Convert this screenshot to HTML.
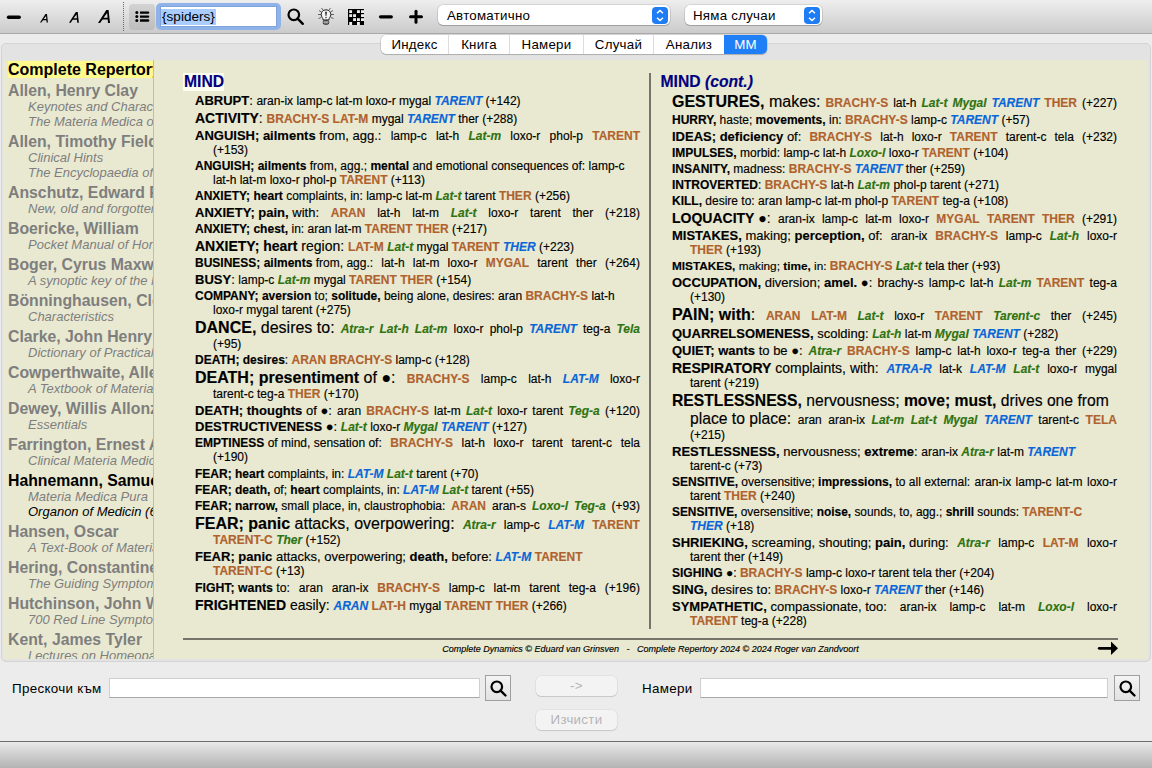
<!DOCTYPE html>
<html><head><meta charset="utf-8">
<style>
*{box-sizing:border-box}
html,body{margin:0;padding:0}
body{width:1152px;height:768px;overflow:hidden;position:relative;background:#ECECEC;font-family:"Liberation Sans",sans-serif;color:#000}
.abs{position:absolute}
#tb{position:absolute;left:0;top:0;width:1152px;height:34px;background:linear-gradient(#EEEEEE,#CBCBCB);border-bottom:1px solid #A9A9A9}
.ta{position:absolute;font-weight:bold;font-style:italic;line-height:1}
#listbtn{position:absolute;left:129px;top:4px;width:26px;height:26px;border-radius:4px;background:linear-gradient(#D3D3D3,#BDBDBD)}
#sf{position:absolute;left:156px;top:3px;width:125px;height:27px;border-radius:5px;background:#8FB3E8;padding:3px 4px}
#sf .in{width:100%;height:100%;background:#fff;border:1px solid #7FA4DA;position:relative}
#sf .sel{position:absolute;left:0px;top:2px;height:16px;background:#A9CDFF;font-size:13.6px;line-height:16px;padding:0 1px;color:#000}
.dd{position:absolute;top:5px;height:20px;background:#fff;border-radius:5px;box-shadow:0 0 0 0.5px rgba(0,0,0,0.18),0 1px 1px rgba(0,0,0,0.18);font-size:13.3px;letter-spacing:0.25px;line-height:20px}
.dd .st{position:absolute;top:1.5px;width:16px;height:17px;border-radius:4px;background:#1E7CF4}
#tabs{position:absolute;left:381px;top:35px;height:19px;display:flex;background:#fff;border-radius:5px;box-shadow:0 0 0 0.5px rgba(0,0,0,0.2),0 1px 1px rgba(0,0,0,0.15);font-size:13.3px;letter-spacing:0.25px;line-height:19px}
#tabs div{text-align:center;border-left:1px solid #DCDCDC}
#tabs div:first-child{border-left:none}
#tabs .on{background:#1F7FF7;color:#fff;border-radius:0 5px 5px 0;border-left:none}
#panel{position:absolute;left:1px;top:43px;width:1150px;height:619px;border:1px solid #D4D4D4;border-radius:5px;background:#E3E3E3}
#cream{position:absolute;left:3px;top:60px;width:1145px;height:599px;background:#E9E9D1}
#side{position:absolute;left:3px;top:60px;width:151px;height:599px;overflow:hidden;border-right:1px solid #BDBDB5}
#side .hl{position:absolute;left:5px;top:1px;width:150px;height:17px;background:#FFFA8C}
#side .cr{position:absolute;left:5px;top:0px;font-weight:bold;font-size:16px;line-height:19px;white-space:nowrap}
#sidelist{position:absolute;left:5px;top:21px;white-space:nowrap;color:#7E7E7E}
.au{font-weight:bold;font-size:15.8px;line-height:17px;margin-top:4px}
.au:first-child{margin-top:1px}
.bk{font-style:italic;font-size:13px;line-height:15px;padding-left:20px}
.act{color:#000}
#main{position:absolute;left:0;top:0;-webkit-text-stroke:0.15px currentColor}
.ln{position:absolute;white-space:nowrap;line-height:20px;height:20px}
.ln.sp{display:flex;justify-content:space-between;align-items:baseline}
.rs{font-size:12px}
.rb{color:#B0622E;font-weight:bold}
.rg{color:#2F7311;font-weight:bold;font-style:italic}
.rl{color:#0A66D8;font-weight:bold;font-style:italic}
.hd{position:absolute;font-weight:bold;color:#000080;font-size:15.7px;line-height:18px;white-space:nowrap}
#vline{position:absolute;left:649px;top:73px;width:2px;height:556px;background:#74746A}
#fline{position:absolute;left:183px;top:638px;width:935px;height:2px;background:#74746A}
#foot{position:absolute;left:183px;top:643px;width:935px;text-align:center;font-style:italic;font-size:9px;line-height:12px;white-space:pre}
.lbl{position:absolute;font-size:13.4px;letter-spacing:0.3px;line-height:16px;white-space:nowrap}
.inp{position:absolute;height:20px;background:#fff;border:1px solid #CFCFCF;border-bottom-color:#A8A8A8}
.sbtn{position:absolute;width:26px;height:26px;border:1px solid #9F9F9F;background:linear-gradient(#F4F4F4,#E2E2E2)}
.pbtn{position:absolute;left:536px;width:81px;height:20px;border-radius:5px;background:#F3F3F3;box-shadow:0 0 0 0.5px rgba(0,0,0,0.08),0 1px 1px rgba(0,0,0,0.12);color:#B5B5B5;font-size:13.3px;letter-spacing:0.3px;line-height:20px;text-align:center}
#bbar{position:absolute;left:0;top:741px;width:1152px;height:27px;border-top:1px solid #6E6E6E;background:linear-gradient(#E9E9E9,#B3B3B3)}
</style></head>
<body>
<div id="tb">
  <svg class="abs" style="left:6px;top:15px" width="16" height="5"><line x1="2.5" y1="2.2" x2="13.2" y2="2.2" stroke="#000" stroke-width="3.4" stroke-linecap="round"/></svg>
  <svg class="abs" style="left:40px;top:14px" width="9" height="9"><g transform="scale(0.66)"><path fill-rule="evenodd" d="M0 13 L8.3 0 L10.6 0 L12 13 L10.0 13 L9.7 9.4 L4.6 9.4 L2.1 13 Z M5.6 7.7 L9.55 7.7 L9.15 2.9 Z" fill="#000"/></g></svg>
  <svg class="abs" style="left:69px;top:12px" width="11" height="11"><g transform="scale(0.823)"><path fill-rule="evenodd" d="M0 13 L8.3 0 L10.6 0 L12 13 L10.0 13 L9.7 9.4 L4.6 9.4 L2.1 13 Z M5.6 7.7 L9.55 7.7 L9.15 2.9 Z" fill="#000"/></g></svg>
  <svg class="abs" style="left:98.2px;top:9.6px" width="13" height="14"><path fill-rule="evenodd" d="M0 13 L8.3 0 L10.6 0 L12 13 L10.0 13 L9.7 9.4 L4.6 9.4 L2.1 13 Z M5.6 7.7 L9.55 7.7 L9.15 2.9 Z" fill="#000"/></svg>
  <div class="abs" style="left:123px;top:2px;width:1px;height:29px;border-left:1px dotted #6A6A6A"></div>
  <div id="listbtn">
    <svg class="abs" style="left:6px;top:7px" width="15" height="12">
      <circle cx="1.8" cy="1.6" r="1.5"/><circle cx="1.8" cy="5.6" r="1.5"/><circle cx="1.8" cy="9.5" r="1.5"/>
      <path d="M5 0.4 H13.6 L14.4 1.6 L13.6 2.8 H5 Z M5 4.4 H13.6 L14.4 5.6 L13.6 6.8 H5 Z M5 8.3 H13.6 L14.4 9.5 L13.6 10.7 H5 Z"/>
    </svg>
  </div>
  <div id="sf"><div class="in"><div class="sel">{spiders}</div></div></div>
  <svg class="abs" style="left:286px;top:7px" width="20" height="20"><circle cx="7.8" cy="7.8" r="5.3" fill="none" stroke="#000" stroke-width="2.2"/><line x1="11.6" y1="11.6" x2="16.8" y2="16.8" stroke="#000" stroke-width="2.4" stroke-linecap="round"/></svg>
  <svg class="abs" style="left:316px;top:7px" width="20" height="19">
    <g stroke="#555" stroke-width="0.9" fill="none">
      <line x1="2" y1="7.5" x2="5" y2="7.5"/><line x1="15" y1="7.5" x2="18" y2="7.5"/>
      <line x1="3" y1="3.5" x2="5.5" y2="5"/><line x1="17" y1="3.5" x2="14.5" y2="5"/>
      <line x1="5.5" y1="1" x2="7" y2="3"/><line x1="14.5" y1="1" x2="13" y2="3"/>
      <line x1="2.5" y1="11.5" x2="5" y2="10.5"/><line x1="17.5" y1="11.5" x2="15" y2="10.5"/>
    </g>
    <path d="M10 2.8 C6.8 2.8 5.2 5.2 5.2 7.5 C5.2 9.8 7 11 7.2 13 L12.8 13 C13 11 14.8 9.8 14.8 7.5 C14.8 5.2 13.2 2.8 10 2.8 Z" fill="#F4F4F4" stroke="#222" stroke-width="1"/>
    <path d="M9.2 4.8 L10.8 4.8 L10.3 9.3 L9.7 9.3 Z" fill="#000"/><rect x="9.5" y="10" width="1" height="1.2" fill="#000"/>
    <rect x="7.3" y="13.3" width="5.4" height="4" rx="1.3" fill="#7A7A7A" stroke="#222" stroke-width="0.8"/>
    <line x1="7.5" y1="15.2" x2="12.5" y2="15.2" stroke="#DDD" stroke-width="0.7"/>
  </svg>
  <svg class="abs" style="left:348px;top:9px" width="16" height="16">
    <rect x="0" y="0" width="16" height="16" fill="#000"/>
    <g fill="#EDEDED">
      <rect x="1.2" y="1.2" width="2.9" height="2.8"/><rect x="9" y="1.2" width="2.9" height="2.8"/><rect x="13" y="1.2" width="3" height="2.8"/>
      <rect x="1.2" y="5.2" width="2.9" height="2.8"/><rect x="5.1" y="5.2" width="2.9" height="2.8"/><rect x="13" y="5.2" width="3" height="2.8"/>
      <rect x="5.1" y="9.2" width="2.9" height="2.8"/><rect x="9" y="9.2" width="2.9" height="2.8"/><rect x="13" y="9.2" width="3" height="2.8"/>
      <rect x="1.2" y="13" width="2.9" height="3"/><rect x="9" y="13" width="2.9" height="3"/>
    </g>
  </svg>
  <svg class="abs" style="left:377px;top:14px" width="18" height="6"><line x1="3.5" y1="2.8" x2="14.3" y2="2.8" stroke="#000" stroke-width="3.2" stroke-linecap="round"/></svg>
  <svg class="abs" style="left:407px;top:8px" width="18" height="18"><line x1="3.5" y1="8.8" x2="14.5" y2="8.8" stroke="#000" stroke-width="3" stroke-linecap="round"/><line x1="9" y1="3.3" x2="9" y2="14.3" stroke="#000" stroke-width="3" stroke-linecap="round"/></svg>
  <div class="dd" style="left:438px;width:232px"><span style="position:absolute;left:9px;top:1px">Автоматично</span>
    <div class="st" style="left:214px"><svg width="16" height="17"><path d="M5 6.3 L8 3.5 L11 6.3 M5 10.7 L8 13.5 L11 10.7" fill="none" stroke="#fff" stroke-width="1.5"/></svg></div></div>
  <div class="dd" style="left:685px;width:137px"><span style="position:absolute;left:8px;top:1px">Няма случаи</span>
    <div class="st" style="left:119px"><svg width="16" height="17"><path d="M5 6.3 L8 3.5 L11 6.3 M5 10.7 L8 13.5 L11 10.7" fill="none" stroke="#fff" stroke-width="1.5"/></svg></div></div>
</div>

<div id="panel"></div>
<div id="tabs">
  <div style="width:67px">Индекс</div>
  <div style="width:61px">Книга</div>
  <div style="width:74px">Намери</div>
  <div style="width:70px">Случай</div>
  <div style="width:71px">Анализ</div>
  <div class="on" style="width:43px">ММ</div>
</div>
<div id="cream"></div>
<div id="side">
  <div class="hl"></div>
  <div class="cr">Complete Repertory</div>
  <div id="sidelist">
<div class="au">Allen, Henry Clay</div>
<div class="bk">Keynotes and Characteristics</div>
<div class="bk">The Materia Medica of the Nosodes</div>
<div class="au">Allen, Timothy Field</div>
<div class="bk">Clinical Hints</div>
<div class="bk">The Encyclopaedia of Pure Materia Medica</div>
<div class="au">Anschutz, Edward Pollock</div>
<div class="bk">New, old and forgotten remedies</div>
<div class="au">Boericke, William</div>
<div class="bk">Pocket Manual of Homoeopathic Materia Medica</div>
<div class="au">Boger, Cyrus Maxwell</div>
<div class="bk">A synoptic key of the Materia Medica</div>
<div class="au">Bönninghausen, Clemens</div>
<div class="bk">Characteristics</div>
<div class="au">Clarke, John Henry</div>
<div class="bk">Dictionary of Practical Materia Medica</div>
<div class="au">Cowperthwaite, Allen Corson</div>
<div class="bk">A Textbook of Materia Medica</div>
<div class="au">Dewey, Willis Allonzo</div>
<div class="bk">Essentials</div>
<div class="au">Farrington, Ernest Albert</div>
<div class="bk">Clinical Materia Medica</div>
<div class="au act">Hahnemann, Samuel</div>
<div class="bk">Materia Medica Pura</div>
<div class="bk act">Organon of Medicin (6th)</div>
<div class="au">Hansen, Oscar</div>
<div class="bk">A Text-Book of Materia Medica</div>
<div class="au">Hering, Constantine</div>
<div class="bk">The Guiding Symptoms</div>
<div class="au">Hutchinson, John W.</div>
<div class="bk">700 Red Line Symptoms</div>
<div class="au">Kent, James Tyler</div>
<div class="bk">Lectures on Homeopathic Materia Medica</div>
  </div>
</div>

<div id="main">
<div class="hd" style="left:183px;top:73px;width:41px;height:18px;background:#FDFDEF;padding-left:1px">MIND</div>
<div class="hd" style="left:660.5px;top:73px">MIND <i>(cont.)</i></div>
<div class="ln" style="left:195.00px;top:91px;width:445.00px;font-size:13.00px"><b>ABRUPT</b>: <span class="rs">aran-ix lamp-c lat-m loxo-r mygal <span class="rl">TARENT</span> (+142)</span></div>
<div class="ln" style="left:195.00px;top:108px;width:445.00px;font-size:14.00px"><b>ACTIVITY</b>: <span class="rs"><span class="rb">BRACHY-S</span> <span class="rb">LAT-M</span> mygal <span class="rl">TARENT</span> ther (+288)</span></div>
<div class="ln sp" style="left:195.00px;top:126px;width:445.00px;font-size:13.00px"><span><b>ANGUISH; ailments</b> from, agg.:</span><span class="rs">lamp-c</span><span class="rs">lat-h</span><span class="rs"><span class="rg">Lat-m</span></span><span class="rs">loxo-r</span><span class="rs">phol-p</span><span class="rs"><span class="rb">TARENT</span></span></div>
<div class="ln" style="left:213.00px;top:140px;width:427.00px;font-size:13.00px"><span class="rs">(+153)</span></div>
<div class="ln" style="left:195.00px;top:156px;width:445.00px;font-size:12.00px"><b>ANGUISH; ailments</b> from, agg.; <b>mental</b> and emotional consequences of: <span class="rs">lamp-c</span></div>
<div class="ln" style="left:213.00px;top:170px;width:427.00px;font-size:12.00px"><span class="rs">lat-h lat-m loxo-r phol-p <span class="rb">TARENT</span> (+113)</span></div>
<div class="ln" style="left:195.00px;top:186px;width:445.00px;font-size:12.00px"><b>ANXIETY; heart</b> complaints, in: <span class="rs">lamp-c lat-m <span class="rg">Lat-t</span> tarent <span class="rb">THER</span> (+256)</span></div>
<div class="ln sp" style="left:195.00px;top:203px;width:445.00px;font-size:13.00px"><span><b>ANXIETY; pain,</b> with:</span><span class="rs"><span class="rb">ARAN</span></span><span class="rs">lat-h</span><span class="rs">lat-m</span><span class="rs"><span class="rg">Lat-t</span></span><span class="rs">loxo-r</span><span class="rs">tarent</span><span class="rs">ther</span><span class="rs">(+218)</span></div>
<div class="ln" style="left:195.00px;top:219px;width:445.00px;font-size:12.00px"><b>ANXIETY; chest,</b> in: <span class="rs">aran lat-m <span class="rb">TARENT</span> <span class="rb">THER</span> (+217)</span></div>
<div class="ln" style="left:195.00px;top:236px;width:445.00px;font-size:14.00px"><b>ANXIETY; heart</b> region: <span class="rs"><span class="rb">LAT-M</span> <span class="rg">Lat-t</span> mygal <span class="rb">TARENT</span> <span class="rl">THER</span> (+223)</span></div>
<div class="ln sp" style="left:195.00px;top:253px;width:445.00px;font-size:12.00px"><span><b>BUSINESS; ailments</b> from, agg.:</span><span class="rs">lat-h</span><span class="rs">lat-m</span><span class="rs">loxo-r</span><span class="rs"><span class="rb">MYGAL</span></span><span class="rs">tarent</span><span class="rs">ther</span><span class="rs">(+264)</span></div>
<div class="ln" style="left:195.00px;top:270px;width:445.00px;font-size:13.00px"><b>BUSY</b>: <span class="rs">lamp-c <span class="rg">Lat-m</span> mygal <span class="rb">TARENT</span> <span class="rb">THER</span> (+154)</span></div>
<div class="ln" style="left:195.00px;top:286px;width:445.00px;font-size:12.00px"><b>COMPANY; aversion</b> to; <b>solitude,</b> being alone, desires: <span class="rs">aran <span class="rb">BRACHY-S</span> lat-h</span></div>
<div class="ln" style="left:213.00px;top:300px;width:427.00px;font-size:12.00px"><span class="rs">loxo-r mygal tarent (+275)</span></div>
<div class="ln sp" style="left:195.00px;top:318px;width:445.00px;font-size:16.00px"><span><b>DANCE,</b> desires to:</span><span class="rs"><span class="rg">Atra-r</span></span><span class="rs"><span class="rg">Lat-h</span></span><span class="rs"><span class="rg">Lat-m</span></span><span class="rs">loxo-r</span><span class="rs">phol-p</span><span class="rs"><span class="rl">TARENT</span></span><span class="rs">teg-a</span><span class="rs"><span class="rg">Tela</span></span></div>
<div class="ln" style="left:213.00px;top:333px;width:427.00px;font-size:16.00px"><span class="rs">(+95)</span></div>
<div class="ln" style="left:195.00px;top:350px;width:445.00px;font-size:12.00px"><b>DEATH; desires</b>: <span class="rs"><span class="rb">ARAN</span> <span class="rb">BRACHY-S</span> lamp-c (+128)</span></div>
<div class="ln sp" style="left:195.00px;top:368px;width:445.00px;font-size:16.00px"><span><b>DEATH; presentiment</b> of ●:</span><span class="rs"><span class="rb">BRACHY-S</span></span><span class="rs">lamp-c</span><span class="rs">lat-h</span><span class="rs"><span class="rl">LAT-M</span></span><span class="rs">loxo-r</span></div>
<div class="ln" style="left:213.00px;top:383px;width:427.00px;font-size:16.00px"><span class="rs">tarent-c teg-a <span class="rb">THER</span> (+170)</span></div>
<div class="ln sp" style="left:195.00px;top:401px;width:445.00px;font-size:13.00px"><span><b>DEATH; thoughts</b> of ●:</span><span class="rs">aran</span><span class="rs"><span class="rb">BRACHY-S</span></span><span class="rs">lat-m</span><span class="rs"><span class="rg">Lat-t</span></span><span class="rs">loxo-r</span><span class="rs">tarent</span><span class="rs"><span class="rg">Teg-a</span></span><span class="rs">(+120)</span></div>
<div class="ln" style="left:195.00px;top:417px;width:445.00px;font-size:13.00px"><b>DESTRUCTIVENESS</b> ●: <span class="rs"><span class="rg">Lat-t</span> loxo-r <span class="rg">Mygal</span> <span class="rl">TARENT</span> (+127)</span></div>
<div class="ln sp" style="left:195.00px;top:433px;width:445.00px;font-size:12.00px"><span><b>EMPTINESS</b> of mind, sensation of:</span><span class="rs"><span class="rb">BRACHY-S</span></span><span class="rs">lat-h</span><span class="rs">loxo-r</span><span class="rs">tarent</span><span class="rs">tarent-c</span><span class="rs">tela</span></div>
<div class="ln" style="left:213.00px;top:447px;width:427.00px;font-size:12.00px"><span class="rs">(+190)</span></div>
<div class="ln" style="left:195.00px;top:464px;width:445.00px;font-size:12.00px"><b>FEAR; heart</b> complaints, in: <span class="rs"><span class="rl">LAT-M</span> <span class="rg">Lat-t</span> tarent (+70)</span></div>
<div class="ln" style="left:195.00px;top:480px;width:445.00px;font-size:12.00px"><b>FEAR; death,</b> of; <b>heart</b> complaints, in: <span class="rs"><span class="rl">LAT-M</span> <span class="rg">Lat-t</span> tarent (+55)</span></div>
<div class="ln sp" style="left:195.00px;top:496px;width:445.00px;font-size:12.00px"><span><b>FEAR; narrow,</b> small place, in, claustrophobia:</span><span class="rs"><span class="rb">ARAN</span></span><span class="rs">aran-s</span><span class="rs"><span class="rg">Loxo-l</span></span><span class="rs"><span class="rg">Teg-a</span></span><span class="rs">(+93)</span></div>
<div class="ln sp" style="left:195.00px;top:514px;width:445.00px;font-size:16.00px"><span><b>FEAR; panic</b> attacks, overpowering:</span><span class="rs"><span class="rg">Atra-r</span></span><span class="rs">lamp-c</span><span class="rs"><span class="rl">LAT-M</span></span><span class="rs"><span class="rb">TARENT</span></span></div>
<div class="ln" style="left:213.00px;top:529px;width:427.00px;font-size:16.00px"><span class="rs"><span class="rb">TARENT-C</span> <span class="rg">Ther</span> (+152)</span></div>
<div class="ln" style="left:195.00px;top:547px;width:445.00px;font-size:13.00px"><b>FEAR; panic</b> attacks, overpowering; <b>death,</b> before: <span class="rs"><span class="rl">LAT-M</span> <span class="rb">TARENT</span></span></div>
<div class="ln" style="left:213.00px;top:561px;width:427.00px;font-size:13.00px"><span class="rs"><span class="rb">TARENT-C</span> (+13)</span></div>
<div class="ln sp" style="left:195.00px;top:578px;width:445.00px;font-size:12.30px"><span><b>FIGHT; wants</b> to:</span><span class="rs">aran</span><span class="rs">aran-ix</span><span class="rs"><span class="rb">BRACHY-S</span></span><span class="rs">lamp-c</span><span class="rs">lat-m</span><span class="rs">tarent</span><span class="rs">teg-a</span><span class="rs">(+196)</span></div>
<div class="ln" style="left:195.00px;top:595px;width:445.00px;font-size:14.00px"><b>FRIGHTENED</b> easily: <span class="rs"><span class="rl">ARAN</span> <span class="rb">LAT-H</span> mygal <span class="rb">TARENT</span> <span class="rb">THER</span> (+266)</span></div>
<div class="ln sp" style="left:672.00px;top:92px;width:445.00px;font-size:16.00px"><span><b>GESTURES,</b> makes:</span><span class="rs"><span class="rb">BRACHY-S</span></span><span class="rs">lat-h</span><span class="rs"><span class="rg">Lat-t</span></span><span class="rs"><span class="rg">Mygal</span></span><span class="rs"><span class="rl">TARENT</span></span><span class="rs"><span class="rb">THER</span></span><span class="rs">(+227)</span></div>
<div class="ln" style="left:672.00px;top:110px;width:445.00px;font-size:12.00px"><b>HURRY,</b> haste; <b>movements,</b> in: <span class="rs"><span class="rb">BRACHY-S</span> lamp-c <span class="rl">TARENT</span> (+57)</span></div>
<div class="ln sp" style="left:672.00px;top:127px;width:445.00px;font-size:13.00px"><span><b>IDEAS; deficiency</b> of:</span><span class="rs"><span class="rb">BRACHY-S</span></span><span class="rs">lat-h</span><span class="rs">loxo-r</span><span class="rs"><span class="rb">TARENT</span></span><span class="rs">tarent-c</span><span class="rs">tela</span><span class="rs">(+232)</span></div>
<div class="ln" style="left:672.00px;top:143px;width:445.00px;font-size:12.00px"><b>IMPULSES,</b> morbid: <span class="rs">lamp-c lat-h <span class="rg">Loxo-l</span> loxo-r <span class="rb">TARENT</span> (+104)</span></div>
<div class="ln" style="left:672.00px;top:159px;width:445.00px;font-size:12.00px"><b>INSANITY,</b> madness: <span class="rs"><span class="rb">BRACHY-S</span> <span class="rl">TARENT</span> ther (+259)</span></div>
<div class="ln" style="left:672.00px;top:175px;width:445.00px;font-size:12.00px"><b>INTROVERTED</b>: <span class="rs"><span class="rb">BRACHY-S</span> lat-h <span class="rg">Lat-m</span> phol-p tarent (+271)</span></div>
<div class="ln" style="left:672.00px;top:191px;width:445.00px;font-size:12.00px"><b>KILL,</b> desire to: <span class="rs">aran lamp-c lat-m phol-p <span class="rb">TARENT</span> teg-a (+108)</span></div>
<div class="ln sp" style="left:672.00px;top:208px;width:445.00px;font-size:14.00px"><span><b>LOQUACITY</b> ●:</span><span class="rs">aran-ix</span><span class="rs">lamp-c</span><span class="rs">lat-m</span><span class="rs">loxo-r</span><span class="rs"><span class="rb">MYGAL</span></span><span class="rs"><span class="rb">TARENT</span></span><span class="rs"><span class="rb">THER</span></span><span class="rs">(+291)</span></div>
<div class="ln sp" style="left:672.00px;top:226px;width:445.00px;font-size:13.00px"><span><b>MISTAKES,</b> making; <b>perception,</b> of:</span><span class="rs">aran-ix</span><span class="rs"><span class="rb">BRACHY-S</span></span><span class="rs">lamp-c</span><span class="rs"><span class="rg">Lat-h</span></span><span class="rs">loxo-r</span></div>
<div class="ln" style="left:690.00px;top:240px;width:427.00px;font-size:13.00px"><span class="rs"><span class="rb">THER</span> (+193)</span></div>
<div class="ln" style="left:672.00px;top:256px;width:445.00px;font-size:11.80px"><b>MISTAKES,</b> making; <b>time,</b> in: <span class="rs"><span class="rb">BRACHY-S</span> <span class="rg">Lat-t</span> tela ther (+93)</span></div>
<div class="ln sp" style="left:672.00px;top:273px;width:445.00px;font-size:13.00px"><span><b>OCCUPATION,</b> diversion; <b>amel.</b> ●:</span><span class="rs">brachy-s</span><span class="rs">lamp-c</span><span class="rs">lat-h</span><span class="rs"><span class="rg">Lat-m</span></span><span class="rs"><span class="rb">TARENT</span></span><span class="rs">teg-a</span></div>
<div class="ln" style="left:690.00px;top:287px;width:427.00px;font-size:13.00px"><span class="rs">(+130)</span></div>
<div class="ln sp" style="left:672.00px;top:305px;width:445.00px;font-size:16.00px"><span><b>PAIN; with</b>:</span><span class="rs"><span class="rb">ARAN</span></span><span class="rs"><span class="rb">LAT-M</span></span><span class="rs"><span class="rg">Lat-t</span></span><span class="rs">loxo-r</span><span class="rs"><span class="rb">TARENT</span></span><span class="rs"><span class="rg">Tarent-c</span></span><span class="rs">ther</span><span class="rs">(+245)</span></div>
<div class="ln" style="left:672.00px;top:324px;width:445.00px;font-size:13.00px"><b>QUARRELSOMENESS,</b> scolding: <span class="rs"><span class="rg">Lat-h</span> lat-m <span class="rg">Mygal</span> <span class="rl">TARENT</span> (+282)</span></div>
<div class="ln sp" style="left:672.00px;top:341px;width:445.00px;font-size:13.00px"><span><b>QUIET; wants</b> to be ●:</span><span class="rs"><span class="rg">Atra-r</span></span><span class="rs"><span class="rb">BRACHY-S</span></span><span class="rs">lamp-c</span><span class="rs">lat-h</span><span class="rs">loxo-r</span><span class="rs">teg-a</span><span class="rs">ther</span><span class="rs">(+229)</span></div>
<div class="ln sp" style="left:672.00px;top:358px;width:445.00px;font-size:14.00px"><span><b>RESPIRATORY</b> complaints, with:</span><span class="rs"><span class="rl">ATRA-R</span></span><span class="rs">lat-k</span><span class="rs"><span class="rl">LAT-M</span></span><span class="rs"><span class="rg">Lat-t</span></span><span class="rs">loxo-r</span><span class="rs">mygal</span></div>
<div class="ln" style="left:690.00px;top:372px;width:427.00px;font-size:14.00px"><span class="rs">tarent (+219)</span></div>
<div class="ln" style="left:672.00px;top:391px;width:445.00px;font-size:15.70px"><b>RESTLESSNESS,</b> nervousness; <b>move; must,</b> drives one from</div>
<div class="ln sp" style="left:690.00px;top:409px;width:427.00px;font-size:15.70px"><span>place to place:</span><span class="rs">aran</span><span class="rs">aran-ix</span><span class="rs"><span class="rg">Lat-m</span></span><span class="rs"><span class="rg">Lat-t</span></span><span class="rs"><span class="rg">Mygal</span></span><span class="rs"><span class="rl">TARENT</span></span><span class="rs">tarent-c</span><span class="rs"><span class="rb">TELA</span></span></div>
<div class="ln" style="left:690.00px;top:424px;width:427.00px;font-size:15.70px"><span class="rs">(+215)</span></div>
<div class="ln" style="left:672.00px;top:442px;width:445.00px;font-size:13.00px"><b>RESTLESSNESS,</b> nervousness; <b>extreme</b>: <span class="rs">aran-ix <span class="rg">Atra-r</span> lat-m <span class="rl">TARENT</span></span></div>
<div class="ln" style="left:690.00px;top:456px;width:427.00px;font-size:13.00px"><span class="rs">tarent-c (+73)</span></div>
<div class="ln sp" style="left:672.00px;top:472px;width:445.00px;font-size:12.00px"><span><b>SENSITIVE,</b> oversensitive; <b>impressions,</b> to all external:</span><span class="rs">aran-ix</span><span class="rs">lamp-c</span><span class="rs">lat-m</span><span class="rs">loxo-r</span></div>
<div class="ln" style="left:690.00px;top:486px;width:427.00px;font-size:12.00px"><span class="rs">tarent <span class="rb">THER</span> (+240)</span></div>
<div class="ln" style="left:672.00px;top:502px;width:445.00px;font-size:11.90px"><b>SENSITIVE,</b> oversensitive; <b>noise,</b> sounds, to, agg.; <b>shrill</b> sounds: <span class="rs"><span class="rb">TARENT-C</span></span></div>
<div class="ln" style="left:690.00px;top:516px;width:427.00px;font-size:11.90px"><span class="rs"><span class="rl">THER</span> (+18)</span></div>
<div class="ln sp" style="left:672.00px;top:533px;width:445.00px;font-size:13.00px"><span><b>SHRIEKING,</b> screaming, shouting; <b>pain,</b> during:</span><span class="rs"><span class="rg">Atra-r</span></span><span class="rs">lamp-c</span><span class="rs"><span class="rb">LAT-M</span></span><span class="rs">loxo-r</span></div>
<div class="ln" style="left:690.00px;top:547px;width:427.00px;font-size:13.00px"><span class="rs">tarent ther (+149)</span></div>
<div class="ln" style="left:672.00px;top:563px;width:445.00px;font-size:12.00px"><b>SIGHING</b> ●: <span class="rs"><span class="rb">BRACHY-S</span> lamp-c loxo-r tarent tela ther (+204)</span></div>
<div class="ln" style="left:672.00px;top:580px;width:445.00px;font-size:13.00px"><b>SING,</b> desires to: <span class="rs"><span class="rb">BRACHY-S</span> loxo-r <span class="rl">TARENT</span> ther (+146)</span></div>
<div class="ln sp" style="left:672.00px;top:597px;width:445.00px;font-size:13.00px"><span><b>SYMPATHETIC,</b> compassionate, too:</span><span class="rs">aran-ix</span><span class="rs">lamp-c</span><span class="rs">lat-m</span><span class="rs"><span class="rg">Loxo-l</span></span><span class="rs">loxo-r</span></div>
<div class="ln" style="left:690.00px;top:611px;width:427.00px;font-size:13.00px"><span class="rs"><span class="rb">TARENT</span> teg-a (+228)</span></div>
<div id="vline"></div>
<div id="fline"></div>
<div id="foot">Complete Dynamics © Eduard van Grinsven   -   Complete Repertory 2024 © 2024 Roger van Zandvoort</div>
<svg class="abs" style="left:1097px;top:641px" width="22" height="15"><line x1="2.2" y1="7.3" x2="14.5" y2="7.3" stroke="#000" stroke-width="2.7" stroke-linecap="round"/><path d="M14 0.5 L21 7.3 L14 14.1 Z" fill="#000"/></svg>
</div>

<div class="lbl" style="left:12px;top:681px">Прескочи към</div>
<div class="inp" style="left:109px;top:677.5px;width:371px"></div>
<div class="sbtn" style="left:485px;top:675px"><svg class="abs" style="left:3px;top:3px" width="20" height="20"><circle cx="7.8" cy="7.8" r="5.3" fill="none" stroke="#000" stroke-width="2.2"/><line x1="11.6" y1="11.6" x2="16.5" y2="16.5" stroke="#000" stroke-width="2.4" stroke-linecap="round"/></svg></div>
<div class="pbtn" style="top:676px">-&gt;</div>
<div class="pbtn" style="top:710px">Изчисти</div>
<div class="lbl" style="left:642px;top:681px">Намери</div>
<div class="inp" style="left:700px;top:677.5px;width:408px"></div>
<div class="sbtn" style="left:1114px;top:675px"><svg class="abs" style="left:3px;top:3px" width="20" height="20"><circle cx="7.8" cy="7.8" r="5.3" fill="none" stroke="#000" stroke-width="2.2"/><line x1="11.6" y1="11.6" x2="16.5" y2="16.5" stroke="#000" stroke-width="2.4" stroke-linecap="round"/></svg></div>
<div id="bbar"></div>
</body></html>
